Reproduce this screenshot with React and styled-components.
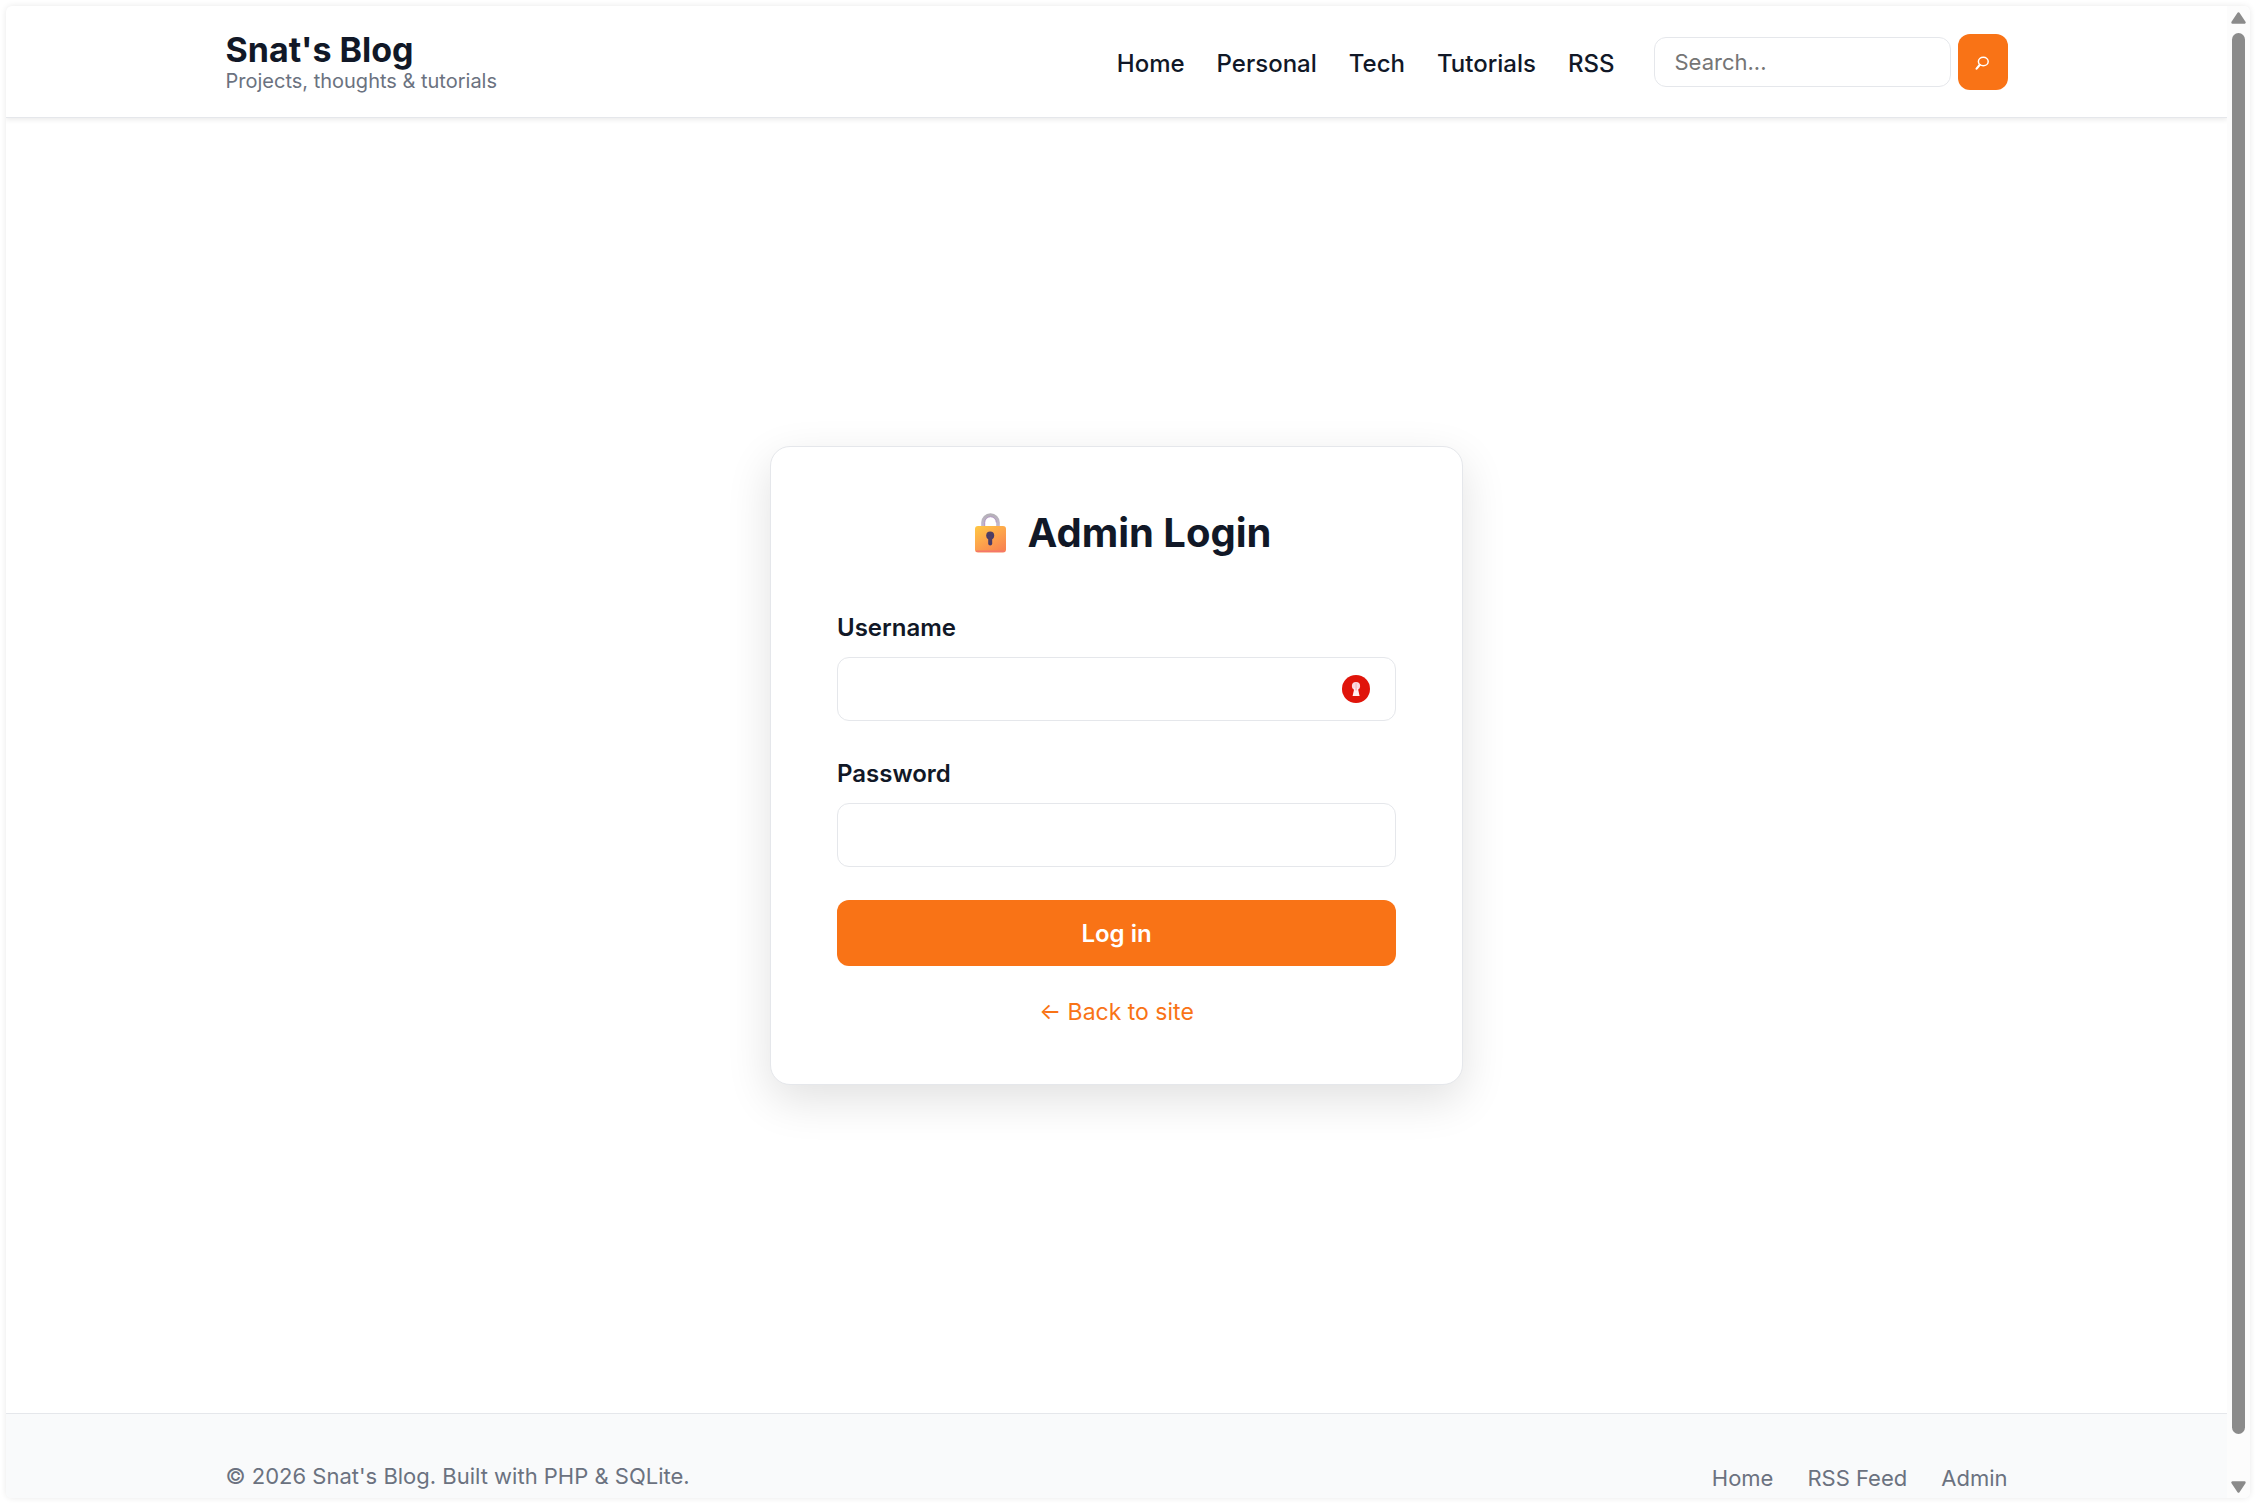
import React from 'react';
import styled, { createGlobalStyle } from 'styled-components';

const GlobalStyle = createGlobalStyle`
  *, *::before, *::after { box-sizing: border-box; }
  html, body { margin: 0; background: #fff; }
  body {
    font-family: Inter, "Liberation Sans", sans-serif;
    color: #111827;
    overflow: hidden;
  }
`;

const Frame = styled.div`
  display: grid;
  grid-template-columns: minmax(0, 1fr) 23px;
  height: calc(100vh - 12px);
  margin: 6px;
  border-radius: 6px;
  overflow: hidden;
  background: #fff;
  box-shadow: 0 0 6px rgba(0, 0, 0, 0.09);
`;

const Page = styled.div`
  display: flex;
  flex-direction: column;
  overflow: hidden;
`;

const Container = styled.div`
  display: flex;
  align-items: center;
  justify-content: space-between;
  width: 100%;
  max-width: 1782px;
  margin: 0 auto;
`;

const Header = styled.header`
  flex: none;
  padding: 24px 0 23px;
  border-bottom: 1px solid #e5e7eb;
  box-shadow: 0 2px 5px rgba(0, 0, 0, 0.08);
`;

const Brand = styled.a`
  display: flex;
  flex-direction: column;
  padding-bottom: 2px;
  color: inherit;
  text-decoration: none;
`;

const BrandName = styled.span`
  font-size: 34px;
  font-weight: 700;
  line-height: 40px;
`;

const Tagline = styled.span`
  font-size: 20px;
  line-height: 22px;
  color: #6b7280;
`;

const HeaderRight = styled.div`
  display: flex;
  align-items: center;
  gap: 39px;
`;

const Links = styled.nav`
  display: flex;
  align-items: center;
  gap: ${(p) => p.$gap}px;
  padding-top: 4px;
`;

const NavLink = styled.a`
  font-size: ${(p) => (p.$muted ? 22 : 24)}px;
  font-weight: ${(p) => (p.$muted ? 400 : 500)};
  line-height: 36px;
  color: ${(p) => (p.$muted ? '#6b7280' : '#111827')};
  text-decoration: none;
`;

const Search = styled.form`
  display: flex;
  align-items: center;
  gap: 7px;
`;

const SearchInput = styled.input`
  width: 297px;
  height: 50px;
  padding: 0 20px;
  border: 1px solid #e5e7eb;
  border-radius: 12px;
  background: #fff;
  font: 400 22px Inter, "Liberation Sans", sans-serif;
  color: #111827;
  &::placeholder { color: #757575; opacity: 1; }
`;

const SearchButton = styled.button`
  display: grid;
  place-items: center;
  width: 50px;
  height: 56px;
  padding: 0;
  border: 0;
  border-radius: 12px;
  background: #f97316;
  color: #fff;
`;

const Main = styled.main`
  flex: none;
  display: grid;
  place-items: center;
  min-height: calc(100vh - 209px);
`;

const Card = styled.section`
  width: 100%;
  max-width: 693px;
  padding: 65px 66px 54px;
  border: 1px solid #e5e7eb;
  border-radius: 20px;
  background: #fff;
  box-shadow: 0 15px 45px rgba(0, 0, 0, 0.12);
`;

const Title = styled.h1`
  display: flex;
  align-items: center;
  justify-content: center;
  gap: 19px;
  margin: 0 0 54px;
  font-size: 40px;
  font-weight: 700;
  line-height: 42px;
`;

const LoginForm = styled.form`
  display: flex;
  flex-direction: column;
  gap: 33px;
`;

const Field = styled.div`
  display: flex;
  flex-direction: column;
  gap: 9px;
`;

const Label = styled.label`
  font-size: 24px;
  font-weight: 600;
  line-height: 40px;
`;

const InputBox = styled.div`
  display: flex;
  align-items: center;
  height: 64px;
  padding-right: 25px;
  border: 1px solid #e5e7eb;
  border-radius: 12px;
  background: #fff;
`;

const TextInput = styled.input`
  flex: 1;
  min-width: 0;
  height: 100%;
  padding: 0 20px;
  border: 0;
  outline: 0;
  background: transparent;
  font: 400 24px Inter, "Liberation Sans", sans-serif;
  color: #111827;
`;

const Submit = styled.button`
  height: 66px;
  border: 0;
  border-radius: 12px;
  background: #f97316;
  color: #fff;
  font: 600 24px Inter, "Liberation Sans", sans-serif;
`;

const BackLink = styled.a`
  display: block;
  width: fit-content;
  margin: 28px auto 0;
  font-size: 23px;
  line-height: 36px;
  color: #f97316;
  text-decoration: none;
`;

const Footer = styled.footer`
  flex: none;
  padding: 42px 0;
  border-top: 1px solid #e5e7eb;
  background: #f9fafb;
`;

const Copyright = styled.p`
  margin: 0;
  font-size: 22px;
  line-height: 36px;
  color: #6b7280;
`;

const ScrollTrack = styled.div`
  display: flex;
  flex-direction: column;
  align-items: center;
  gap: 9px;
  padding: 6px 4px 5px;
  background: #fcfcfc;
`;

const ScrollThumb = styled.div`
  width: 13px;
  flex: 1;
  margin-bottom: 38px;
  border-radius: 7px;
  background: #8b8b8b;
`;

const Arrow = ({ down }) => (
  <svg width="15" height="12" viewBox="0 0 15 12" aria-hidden="true">
    <path
      d="M7.5 1.5 L13.5 10.5 H1.5 Z"
      fill="#8b8b8b"
      stroke="#8b8b8b"
      strokeWidth="2.4"
      strokeLinejoin="round"
      transform={down ? 'rotate(180 7.5 6)' : undefined}
    />
  </svg>
);

const SearchGlyph = () => (
  <svg width="16" height="16" viewBox="0 0 16 16" fill="none" stroke="currentColor" aria-hidden="true">
    <ellipse cx="8.3" cy="7.5" rx="4.9" ry="4.3" strokeWidth="1.5" />
    <path d="M4.8 10.8 L1.6 14.6" strokeWidth="2.2" strokeLinecap="round" />
  </svg>
);

const Padlock = () => (
  <svg width="47" height="42" viewBox="-13 0 47 42" aria-hidden="true">
    <defs>
      <linearGradient id="lockBody" x1="0" y1="0" x2="0.7" y2="1">
        <stop offset="0" stopColor="#ffc843" />
        <stop offset="0.5" stopColor="#fda74b" />
        <stop offset="1" stopColor="#f9854f" />
      </linearGradient>
      <linearGradient id="lockShackle" x1="0" y1="0" x2="0" y2="1">
        <stop offset="0" stopColor="#b5b1b8" />
        <stop offset="1" stopColor="#c5b9d3" />
      </linearGradient>
      <linearGradient id="lockHole" x1="0" y1="0" x2="0" y2="1">
        <stop offset="0" stopColor="#524060" />
        <stop offset="1" stopColor="#43396c" />
      </linearGradient>
    </defs>
    <path d="M9 16 V10.5 a7.5 7.5 0 0 1 15 0 V16" fill="none" stroke="url(#lockShackle)" strokeWidth="3.6" />
    <path d="M10.7 15 V10.5 a5.8 5.8 0 0 1 11.6 0" fill="none" stroke="#b394c4" strokeWidth="1" />
    <rect x="1" y="14" width="31" height="26.5" rx="3" fill="url(#lockBody)" />
    <path d="M2.5 39.3 H30" stroke="#f4766c" strokeWidth="1.4" strokeLinecap="round" />
    <circle cx="16.2" cy="23.6" r="4" fill="url(#lockHole)" />
    <path d="M14.2 24 V31.5 a2 2 0 0 0 4 0 V24 Z" fill="url(#lockHole)" />
  </svg>
);

const KeyBadge = () => (
  <svg width="28" height="28" viewBox="0 0 28 28" aria-hidden="true">
    <circle cx="14" cy="14" r="14" fill="#e0140a" />
    <circle cx="14" cy="11" r="4.1" fill="#fbd9e0" />
    <path d="M12.4 13 L10.6 21 H17.6 L15.8 13 Z" fill="#fff0f2" />
    <path d="M13.2 8 H15 V15.5 H13.2 Z" fill="#f7c3cc" />
  </svg>
);

const navItems = ['Home', 'Personal', 'Tech', 'Tutorials', 'RSS'];
const footerItems = ['Home', 'RSS Feed', 'Admin'];

export default function App() {
  return (
    <>
      <GlobalStyle />
      <Frame>
        <Page>
          <Header>
            <Container>
              <Brand href="#">
                <BrandName>Snat's Blog</BrandName>
                <Tagline>Projects, thoughts &amp; tutorials</Tagline>
              </Brand>
              <HeaderRight>
                <Links aria-label="Main" $gap={32}>
                  {navItems.map((item) => (
                    <NavLink key={item} href="#">{item}</NavLink>
                  ))}
                </Links>
                <Search role="search">
                  <SearchInput type="search" placeholder="Search..." aria-label="Search" />
                  <SearchButton type="button" aria-label="Submit search">
                    <SearchGlyph />
                  </SearchButton>
                </Search>
              </HeaderRight>
            </Container>
          </Header>
          <Main>
            <Card>
              <Title>
                <Padlock />
                Admin Login
              </Title>
              <LoginForm>
                <Field>
                  <Label htmlFor="username">Username</Label>
                  <InputBox>
                    <TextInput id="username" type="text" />
                    <KeyBadge />
                  </InputBox>
                </Field>
                <Field>
                  <Label htmlFor="password">Password</Label>
                  <InputBox>
                    <TextInput id="password" type="password" />
                  </InputBox>
                </Field>
                <Submit type="button">Log in</Submit>
              </LoginForm>
              <BackLink href="#">← Back to site</BackLink>
            </Card>
          </Main>
          <Footer>
            <Container>
              <Copyright>© 2026 Snat's Blog. Built with PHP &amp; SQLite.</Copyright>
              <Links aria-label="Footer" $gap={34}>
                {footerItems.map((item) => (
                  <NavLink key={item} href="#" $muted>{item}</NavLink>
                ))}
              </Links>
            </Container>
          </Footer>
        </Page>
        <ScrollTrack aria-hidden="true">
          <Arrow />
          <ScrollThumb />
          <Arrow down />
        </ScrollTrack>
      </Frame>
    </>
  );
}
